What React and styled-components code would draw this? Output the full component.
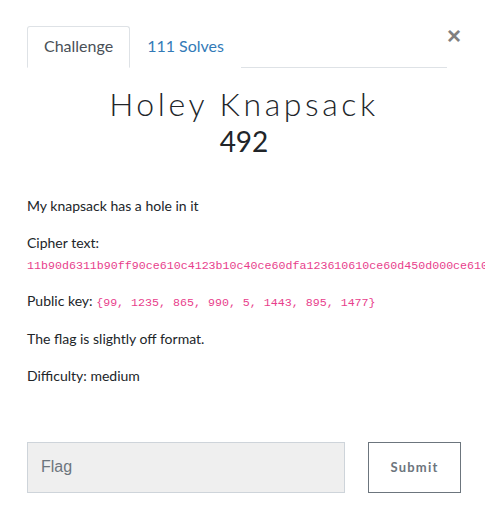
import React from "react";
import styled, { createGlobalStyle } from "styled-components";

const Global = createGlobalStyle`
  html, body { margin: 0; padding: 0; background: #fff; }
  body {
    font-family: Lato, "Open Sans", sans-serif;
    font-size: 14px;
    line-height: 1.5;
    color: #212529;
    overflow: hidden;
    width: 485px;
    height: 531px;
  }
`;

const Modal = styled.div`
  position: relative;
  padding: 26px 0 0 27px;
`;

const Close = styled.button`
  position: absolute;
  top: 24px;
  left: 447px;
  border: 0;
  background: none;
  padding: 0;
  font-family: "Liberation Sans", Arial, sans-serif;
  font-size: 24px;
  font-weight: 700;
  line-height: 1;
  color: #808080;
  cursor: pointer;
`;

const Nav = styled.div`
  display: flex;
  width: 420px;
  border-bottom: 1px solid #dee2e6;
`;

const Tab = styled.div`
  padding: 8px 16px 10px;
  font-size: 16px;
  line-height: 22px;
  margin-bottom: -1px;
  border: 1px solid ${(p) => (p.$active ? "#dee2e6" : "transparent")};
  border-bottom-color: ${(p) => (p.$active ? "#fff" : "transparent")};
  border-radius: 3px 3px 0 0;
  background: #fff;
  color: ${(p) => (p.$active ? "#495057" : "#337ab7")};
`;

const Title = styled.h2`
  margin: 16px 0 0;
  width: 434px;
  text-align: center;
  font-family: Lato, sans-serif;
  font-weight: 300;
  font-size: 32px;
  letter-spacing: 3.6px;
  line-height: 40px;
  color: #212529;
`;

const Points = styled.h3`
  margin: 0;
  width: 434px;
  text-align: center;
  font-weight: 400;
  font-size: 28px;
  line-height: 34px;
  color: #212529;
`;

const Description = styled.div`
  margin-top: 37px;
`;

const P = styled.p`
  margin: 0 0 16px;
  white-space: nowrap;
`;

const Code = styled.code`
  font-family: "Liberation Mono", monospace;
  font-size: 11.65px;
  color: #e83e8c;
`;

const Form = styled.div`
  display: flex;
  gap: 23px;
  margin-top: 56px;
`;

const FlagInput = styled.input`
  box-sizing: border-box;
  width: 318px;
  height: 51px;
  padding: 0 13px;
  border: 1px solid #ced4da;
  background: #efefef;
  font-family: "Liberation Sans", Arial, sans-serif;
  font-size: 16px;
  color: #495057;
  outline: none;
  &::placeholder { color: #6c757d; opacity: 1; }
`;

const Submit = styled.button`
  box-sizing: border-box;
  width: 93px;
  height: 51px;
  border: 1px solid #6c757d;
  background: #fff;
  font-family: Lato, sans-serif;
  font-weight: 700;
  font-size: 13px;
  letter-spacing: 1.2px;
  color: #6c757d;
  cursor: pointer;
`;

export default function App() {
  return (
    <>
      <Global />
      <Modal>
        <Close aria-label="Close">×</Close>
        <Nav>
          <Tab $active>Challenge</Tab>
          <Tab>111 Solves</Tab>
        </Nav>
        <Title>Holey Knapsack</Title>
        <Points>492</Points>
        <Description>
          <P>My knapsack has a hole in it</P>
          <P>
            Cipher text:
            <br />
            <Code>
              11b90d6311b90ff90ce610c4123b10c40ce60dfa123610610ce60d450d000ce61061106110c4098515340d4512361534098509270e5d09850e58123610c9
            </Code>
          </P>
          <P>
            Public key: <Code>{"{99, 1235, 865, 990, 5, 1443, 895, 1477}"}</Code>
          </P>
          <P>The flag is slightly off format.</P>
          <P>Difficulty: medium</P>
        </Description>
        <Form>
          <FlagInput placeholder="Flag" />
          <Submit>Submit</Submit>
        </Form>
      </Modal>
    </>
  );
}
